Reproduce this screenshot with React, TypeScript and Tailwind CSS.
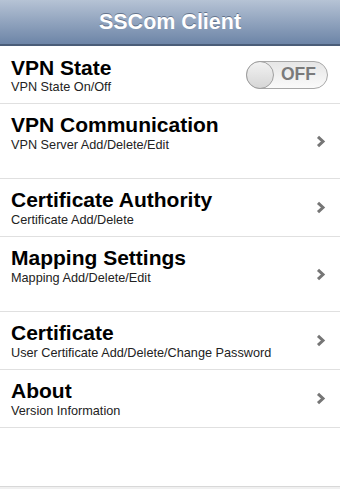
import React from 'react'

type Item = { title: string; sub: string; tall?: boolean }

const items: Item[] = [
  { title: 'VPN Communication', sub: 'VPN Server Add/Delete/Edit', tall: true },
  { title: 'Certificate Authority', sub: 'Certificate Add/Delete' },
  { title: 'Mapping Settings', sub: 'Mapping Add/Delete/Edit', tall: true },
  { title: 'Certificate', sub: 'User Certificate Add/Delete/Change Password' },
  { title: 'About', sub: 'Version Information' },
]

const Chevron = () => (
  <svg width="10" height="13" viewBox="0 0 10 13" className="shrink-0">
    <path d="M2 1.8 L7 6.5 L2 11.2" fill="none" stroke="#767676" strokeWidth="3" />
  </svg>
)

const Row = ({ item }: { item: Item }) => (
  <div
    className={`flex items-center justify-between border-b border-[#e0e0e0] pl-[11px] pr-[14px] ${
      item.tall ? 'h-[75px]' : 'h-[58px]'
    }`}
  >
    <div className={`flex flex-col ${item.tall ? 'self-start pt-[8px]' : ''}`}>
      <span className="text-[21px] font-bold leading-[25px] text-black">{item.title}</span>
      <span className="mt-[1px] text-[12.7px] leading-[15px] text-[#222]">{item.sub}</span>
    </div>
    <Chevron />
  </div>
)

export default function App() {
  return (
    <div className="flex h-[489px] w-[340px] flex-col bg-white font-['Liberation_Sans',Arial,sans-serif]">
      <div className="flex h-[46px] shrink-0 items-center justify-center border-b-2 border-[#4a5d78] bg-gradient-to-b from-[#b6c3d5] to-[#6d85a7]">
        <span className="text-[21.5px] font-bold text-white [text-shadow:0_-1px_0_rgba(60,75,100,0.6)]">SSCom Client</span>
      </div>
      <div className="flex h-[58px] items-center justify-between border-b border-[#e0e0e0] pl-[11px] pr-[12px]">
        <div className="flex flex-col">
          <span className="text-[21px] font-bold leading-[25px] text-black">VPN State</span>
          <span className="text-[12.7px] leading-[15px] text-[#222]">VPN State On/Off</span>
        </div>
        <div className="relative flex h-[28px] w-[82px] items-center justify-end rounded-full border border-[#a8a8a8] bg-gradient-to-b from-[#e6e6e6] to-[#fafafa] pr-[11px]">
          <div className="absolute left-[-1px] top-[-1px] h-[28px] w-[28px] rounded-full border border-[#a0a0a0] bg-gradient-to-b from-[#f2f2f2] to-[#d6d6d6]" />
          <span className="text-[17.5px] font-bold text-[#7a7a7a]">OFF</span>
        </div>
      </div>
      {items.map((it) => (
        <Row key={it.title} item={it} />
      ))}
      <div className="flex-1" />
      <div className="h-[3px] border-t border-[#d8d8d8] bg-[#f0f0f0]" />
    </div>
  )
}
